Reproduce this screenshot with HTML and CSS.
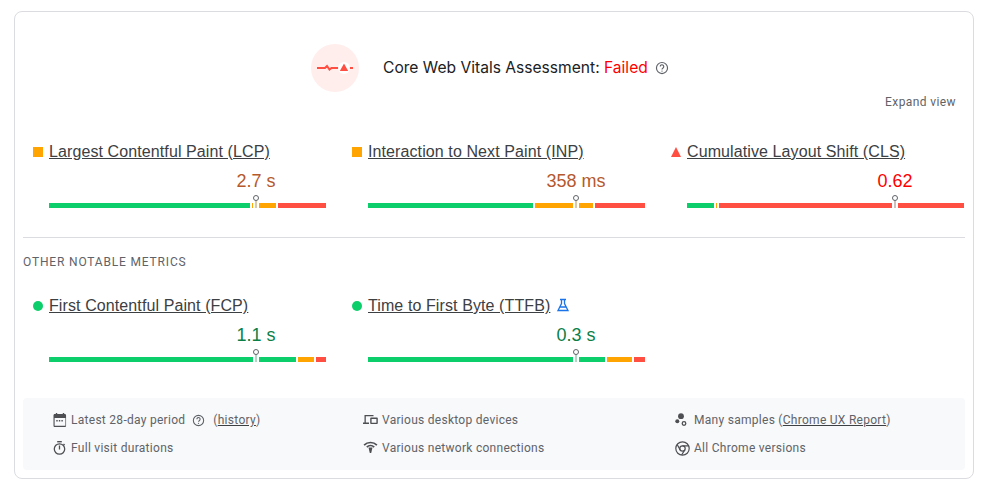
FILE: index.html
```html
<!DOCTYPE html>
<html>
<head>
    <title>Core Web Vitals Assessment</title>
    <link rel="stylesheet" href="styles.css">
</head>
<body>
    <div class="card">
        <div class="verdict">
            <div class="verdict-badge">
                <svg width="38" height="12" viewBox="0 0 38 12">
                    <path d="M1 6h8l2-2 2.500 3.500 2-1.500h8M32 6h5" fill="none" stroke="#ff4e42" stroke-width="2"/>
                    <circle cx="28" cy="6" r="6" fill="#fff"/>
                    <path d="M28 1.500l4.200 7.500h-8.400z" fill="#ff4e42"/>
                </svg>
            </div>
            <div class="verdict-text">Core Web Vitals Assessment: <span class="failed">Failed</span></div>
            <svg class="help" width="14" height="14" viewBox="0 0 24 24"><circle cx="12" cy="12" r="9.500" fill="none" stroke="#5f6368" stroke-width="2"/><path d="M9 9.500a3 3 0 1 1 4.800 2.400c-1.100.8-1.800 1.400-1.800 2.600" fill="none" stroke="#5f6368" stroke-width="2"/><circle cx="12" cy="17.300" r="1.200" fill="#5f6368"/></svg>
        </div>
        <div class="expand">Expand view</div>

        <div class="metrics">
            <div class="metric">
                <div class="metric-title"><span class="shape square"></span><a>Largest Contentful Paint (LCP)</a></div>
                <div class="track">
                    <div class="value average" style="left: 207px">2.7 s</div>
                    <div class="bar">
                        <div class="seg good" style="width: 201px"></div>
                        <div class="seg ok" style="width: 24px"></div>
                        <div class="seg bad" style="width: 48px"></div>
                    </div>
                    <div class="marker m-average" style="left: 207px"></div>
                </div>
            </div>
            <div class="metric">
                <div class="metric-title"><span class="shape square"></span><a>Interaction to Next Paint (INP)</a></div>
                <div class="track">
                    <div class="value average" style="left: 208px">358 ms</div>
                    <div class="bar">
                        <div class="seg good" style="width: 165px"></div>
                        <div class="seg ok" style="width: 58px"></div>
                        <div class="seg bad" style="width: 50px"></div>
                    </div>
                    <div class="marker m-average" style="left: 208px"></div>
                </div>
            </div>
            <div class="metric">
                <div class="metric-title"><span class="shape triangle"></span><a>Cumulative Layout Shift (CLS)</a></div>
                <div class="track">
                    <div class="value poor" style="left: 208px">0.62</div>
                    <div class="bar">
                        <div class="seg good" style="width: 27px"></div>
                        <div class="seg ok" style="width: 1px"></div>
                        <div class="seg bad" style="width: 245px"></div>
                    </div>
                    <div class="marker m-poor" style="left: 208px"></div>
                </div>
            </div>
        </div>

        <hr class="divider">
        <div class="section-title">OTHER NOTABLE METRICS</div>

        <div class="metrics second">
            <div class="metric">
                <div class="metric-title"><span class="shape circle"></span><a>First Contentful Paint (FCP)</a></div>
                <div class="track">
                    <div class="value fast" style="left: 207px">1.1 s</div>
                    <div class="bar">
                        <div class="seg good" style="width: 247px"></div>
                        <div class="seg ok" style="width: 16px"></div>
                        <div class="seg bad" style="width: 10px"></div>
                    </div>
                    <div class="marker m-fast" style="left: 207px"></div>
                </div>
            </div>
            <div class="metric">
                <div class="metric-title"><span class="shape circle"></span><a>Time to First Byte (TTFB)</a>
                    <svg class="flask" width="14" height="14" viewBox="0 0 14 14"><path d="M4 1.500h6M5.500 1.500v4L2 12.500h10L8.500 5.500v-4M4 9h6" fill="none" stroke="#1a73e8" stroke-width="1.300"/></svg>
                </div>
                <div class="track">
                    <div class="value fast" style="left: 208px">0.3 s</div>
                    <div class="bar">
                        <div class="seg good" style="width: 237px"></div>
                        <div class="seg ok" style="width: 25px"></div>
                        <div class="seg bad" style="width: 11px"></div>
                    </div>
                    <div class="marker m-fast" style="left: 208px"></div>
                </div>
            </div>
        </div>

        <div class="summary">
            <div class="summary-item">
                <svg width="14" height="14" viewBox="0 0 14 14"><path d="M2.500 0h1.500v1h6V0h1.500v1h.7c.7 0 1.300.6 1.300 1.300v10.400c0 .7-.6 1.300-1.300 1.300H1.300C.6 14 0 13.400 0 12.700V2.300C0 1.600.6 1 1.300 1h1.200zM1.200 5v7.800h11.600V5zM3 7h1.500v1.500H3zM5.750 7h1.500v1.500h-1.500zM8.500 7H10v1.500H8.500z" fill="#4d4f53" fill-rule="evenodd" transform="translate(0.500 0) scale(0.93 1)"/></svg>
                <span>Latest 28-day period</span>
                <svg class="help small" width="13" height="13" viewBox="0 0 24 24"><circle cx="12" cy="12" r="9.500" fill="none" stroke="#5f6368" stroke-width="2"/><path d="M9 9.500a3 3 0 1 1 4.800 2.400c-1.100.8-1.800 1.400-1.800 2.600" fill="none" stroke="#5f6368" stroke-width="2"/><circle cx="12" cy="17.300" r="1.200" fill="#5f6368"/></svg>
                <span>(<a>history</a>)</span>
            </div>
            <div class="summary-item">
                <svg width="15" height="14" viewBox="0 0 15 14"><path d="M1.500 2h9v1.200H2.800v6.300H6V11H0V9.500h1.500zM8 4.500h6c.4 0 .8.400.8.800v5c0 .4-.4.800-.8.800H8c-.4 0-.8-.4-.8-.8v-5c0-.4.400-.8.800-.8zM8.600 6v3.700h4.800V6z" fill="#4d4f53" fill-rule="evenodd"/></svg>
                <span>Various desktop devices</span>
            </div>
            <div class="summary-item">
                <svg class="samples" width="14" height="14" viewBox="0 0 14 14"><circle cx="6" cy="3.200" r="2.900" fill="#4d4f53"/><circle cx="2.300" cy="8.200" r="2" fill="#4d4f53"/><circle cx="9" cy="10.500" r="1.800" fill="none" stroke="#4d4f53" stroke-width="1.300"/></svg>
                <span>Many samples (<a>Chrome UX Report</a>)</span>
            </div>
            <div class="summary-item">
                <svg width="14" height="14" viewBox="0 0 14 14"><path d="M4.200.7h4.600" fill="none" stroke="#4d4f53" stroke-width="1.400"/><circle cx="6.500" cy="8" r="5.200" fill="none" stroke="#4d4f53" stroke-width="1.300"/><path d="M6.500 4.500v4" fill="none" stroke="#4d4f53" stroke-width="1.300"/><path d="M10.500 3l1.200 1.200" fill="none" stroke="#4d4f53" stroke-width="1.200"/></svg>
                <span>Full visit durations</span>
            </div>
            <div class="summary-item">
                <svg width="15" height="14" viewBox="0 0 15 14"><path d="M.5 5.500a10 10 0 0 1 14 0l-1.200 1.200a8.300 8.300 0 0 0-11.600 0zM3.200 7.500a6.300 6.300 0 0 1 8.600 0l-1.200 1.200a4.600 4.600 0 0 0-6.200 0z" fill="#4d4f53" transform="translate(0 -2)"/><path d="M5.500 6.500h4L8.200 12H6.800z" fill="#4d4f53"/></svg>
                <span>Various network connections</span>
            </div>
            <div class="summary-item">
                <svg width="15" height="15" viewBox="0 0 15 15"><circle cx="7.500" cy="7.500" r="6.700" fill="none" stroke="#4d4f53" stroke-width="1.200"/><circle cx="7.500" cy="7.500" r="2.700" fill="none" stroke="#4d4f53" stroke-width="1.200"/><path d="M7.500 4.800h6.200M5.200 8.900L2 3.200M9.800 8.900L6.600 14" fill="none" stroke="#4d4f53" stroke-width="1.200"/></svg>
                <span>All Chrome versions</span>
            </div>
        </div>
    </div>
</body>
</html>
```

FILE: styles.css
```css
body {
    margin: 0;
    padding: 11px 10px 0 14px;
    background: #fff;
    font-family: 'Liberation Sans', Arial, sans-serif;
}
.card {
    box-sizing: border-box;
    width: 960px;
    height: 468px;
    padding: 32px 8px 8px;
    border: 1px solid #dadce0;
    border-radius: 8px;
}
.verdict {
    display: flex;
    align-items: center;
    height: 48px;
    padding-left: 288px;
}
.verdict-badge {
    display: flex;
    align-items: center;
    justify-content: center;
    width: 48px;
    height: 48px;
    border-radius: 50%;
    background: #ffeeec;
    margin-right: 24px;
}
.verdict-text {
    font-family: Inter, sans-serif;
    font-size: 15.6px;
    color: #202124;
    margin-bottom: 2px;
}
.failed {
    color: #f00;
}
.help {
    margin-left: 7px;
}
.help.small {
    margin: 0 8px 0 7px;
}
.expand {
    margin-top: 2px;
    height: 16px;
    padding-right: 9px;
    text-align: right;
    font-family: Roboto, sans-serif;
    font-size: 12px;
    letter-spacing: 0.4px;
    line-height: 16px;
    color: #5f6368;
}
.metrics {
    display: grid;
    grid-template-columns: repeat(3, 293px);
    column-gap: 26px;
    padding: 32px 0 0 10px;
}
.metrics.second {
    padding-top: 26px;
}
.metric-title {
    display: flex;
    align-items: center;
    height: 20px;
    font-size: 16px;
    letter-spacing: 0.1px;
    color: #3c4043;
}
.metric-title a {
    text-decoration: underline;
    margin-left: 6px;
}
.shape {
    flex: none;
    width: 10px;
    height: 10px;
}
.square {
    background: #ffa400;
}
.circle {
    border-radius: 50%;
    background: #0cce6b;
}
.triangle {
    width: 0;
    height: 0;
    border-left: 5px solid transparent;
    border-right: 5px solid transparent;
    border-bottom: 10px solid #ff4e42;
}
.flask {
    margin-left: 6px;
    margin-top: -2px;
}
.track {
    position: relative;
    height: 46px;
    margin-left: 16px;
    width: 277px;
}
.value {
    position: absolute;
    top: 8px;
    transform: translateX(-50%);
    font-size: 18px;
    line-height: 22px;
    white-space: nowrap;
    letter-spacing: 0;
}
.average {
    color: #b5592d;
}
.poor {
    color: #f00;
}
.fast {
    color: #0a7f48;
}
.bar {
    position: absolute;
    left: 0;
    right: 0;
    top: 41px;
    display: flex;
    gap: 2px;
    height: 5px;
}
.seg {
    flex: none;
    height: 5px;
}
.seg.good {
    background: #0cce6b;
}
.seg.ok {
    background: #ffa400;
}
.seg.bad {
    background: #ff4e42;
}
.marker {
    position: absolute;
    top: 38px;
    box-sizing: border-box;
    width: 6px;
    height: 8px;
    margin-left: -3px;
    background: #fff;
    border-left: 2px solid #fff;
    border-right: 2px solid #fff;
}
.marker::before {
    content: "";
    position: absolute;
    left: -2px;
    top: -5px;
    box-sizing: border-box;
    width: 6px;
    height: 6px;
    border: 1px solid #5f6368;
    border-radius: 50%;
    background: #fff;
}
.m-average {
    background: #d9c7a5;
}
.m-poor {
    background: #d0c0bd;
}
.m-fast {
    background: #aad8c2;
}
.divider {
    border: none;
    border-top: 1px solid #dadce0;
    margin: 29px 0 0;
}
.section-title {
    margin-top: 16px;
    font-family: Roboto, sans-serif;
    font-size: 12px;
    line-height: 16px;
    letter-spacing: 0.83px;
    color: #5f6368;
}
.summary {
    box-sizing: border-box;
    display: grid;
    grid-template-columns: 310px 312px 1fr;
    grid-auto-rows: 28px;
    align-items: center;
    width: 942px;
    height: 72px;
    margin-top: 36px;
    padding: 8px 0 8px 30px;
    background: #f8f9fa;
    border-radius: 4px;
    font-family: Roboto, sans-serif;
    font-size: 12px;
    letter-spacing: 0.28px;
    color: #5f6368;
}
.summary-item {
    display: flex;
    align-items: center;
}
.summary-item > svg:first-child {
    flex: none;
    margin-right: 4px;
}
.summary-item > svg.samples {
    margin-right: 5px;
}
.summary a {
    text-decoration: underline;
    text-decoration-color: #3c4043;
}
```
